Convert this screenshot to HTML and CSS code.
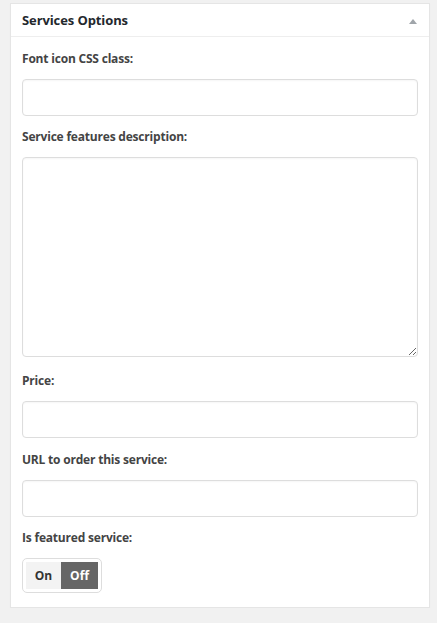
FILE: index.html
```html
<!DOCTYPE html>
<html>
<head>
<meta charset="utf-8">
<link rel="stylesheet" href="styles.css">
</head>
<body>
<div class="panel">
  <div class="panel-head">
    <h2 class="panel-title">Services Options</h2>
    <span class="toggle-arrow"></span>
  </div>
  <div class="panel-body">
    <div class="field field-first">
      <label class="field-label">Font icon CSS class:</label>
      <input class="text-input" type="text">
    </div>
    <div class="field field-area">
      <label class="field-label">Service features description:</label>
      <textarea class="text-area"></textarea>
    </div>
    <div class="field">
      <label class="field-label">Price:</label>
      <input class="text-input" type="text">
    </div>
    <div class="field field-tight">
      <label class="field-label">URL to order this service:</label>
      <input class="text-input" type="text">
    </div>
    <div class="field">
      <label class="field-label">Is featured service:</label>
      <div class="switch">
        <span class="switch-opt">On</span>
        <span class="switch-opt switch-opt-active">Off</span>
      </div>
    </div>
  </div>
</div>
</body>
</html>
```
FILE: styles.css
```css
html, body {
  margin: 0;
  padding: 0;
  background: #f1f1f1;
}
body {
  padding: 3px 7px 0 10px;
  font-family: "Open Sans", "Liberation Sans", sans-serif;
}
.panel {
  width: 420px;
  box-sizing: border-box;
  background: #fff;
  border: 1px solid #e5e5e5;
  box-shadow: 0 1px 1px rgba(0,0,0,.04);
}
.panel-head {
  height: 32px;
  border-bottom: 1px solid #eee;
  display: flex;
  align-items: center;
  justify-content: space-between;
  padding: 0 12px 0 11px;
}
.panel-title {
  margin: 0;
  font-size: 13px;
  letter-spacing: -0.1px;
  font-weight: 700;
  color: #23282d;
  line-height: 20px;
}
.toggle-arrow {
  width: 0;
  height: 0;
  border-left: 4px solid transparent;
  border-right: 4px solid transparent;
  border-bottom: 5px solid #a0a5aa;
  margin-top: 2px;
}
.panel-body {
  padding: 12px 11px 14px 11px;
}
.field {
  margin-bottom: 12px;
}
.field:last-child {
  margin-bottom: 0;
}
.field-first {
  margin-bottom: 11px;
}
.field-area {
  margin-bottom: 14px;
}
.field-tight {
  margin-bottom: 11px;
}
.field-label {
  display: block;
  font-size: 12px;
  letter-spacing: -0.2px;
  font-weight: 700;
  color: #444;
  line-height: 20px;
  margin-bottom: 10px;
}
.text-input, .text-area {
  display: block;
  width: 396px;
  box-sizing: border-box;
  border: 1px solid #ddd;
  border-radius: 4px;
  background: #fff;
  box-shadow: inset 0 1px 2px rgba(0,0,0,.04);
  margin: 0;
  font-family: inherit;
}
.text-input {
  height: 37px;
}
.text-area {
  height: 200px;
  resize: vertical;
}
.switch {
  display: inline-flex;
  padding: 3px;
  border: 1px solid #ddd;
  border-radius: 5px;
}
.switch-opt {
  display: flex;
  align-items: center;
  justify-content: center;
  height: 27px;
  width: 35px;
  font-size: 12px;
  font-weight: 700;
  color: #333;
  background: #f3f3f3;
}
.switch-opt-active {
  width: 37px;
  background: #666;
  color: #fff;
}
```
